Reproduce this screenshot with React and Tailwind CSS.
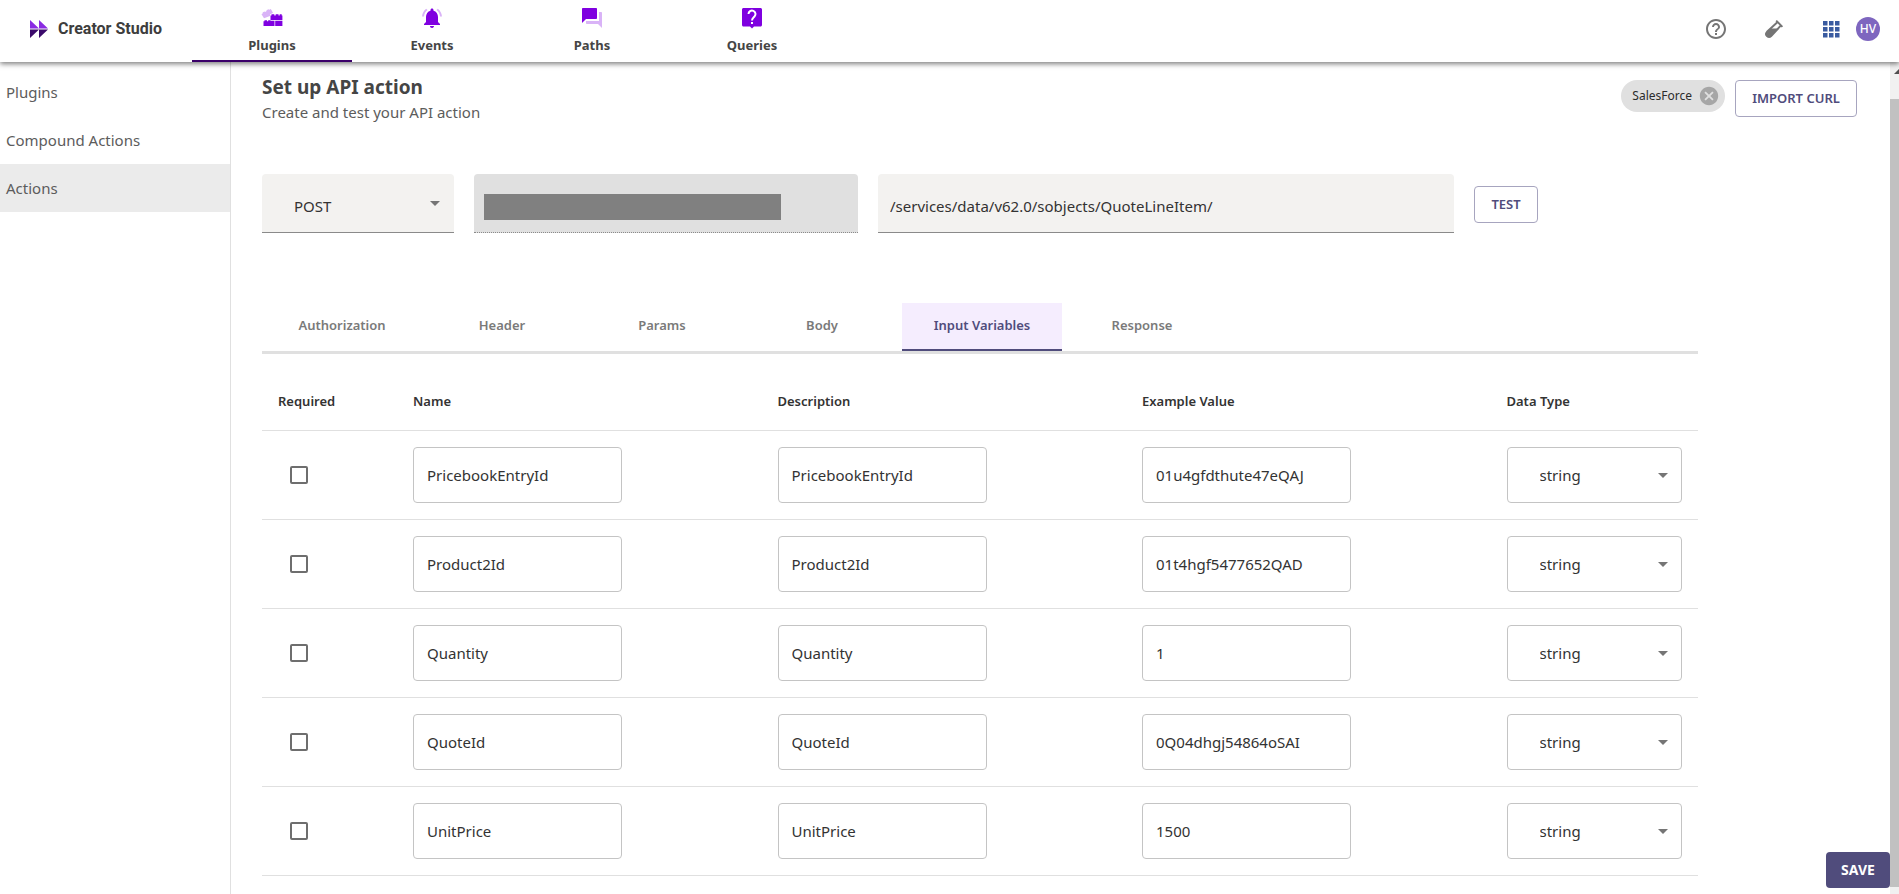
import { useState } from "react";
import { MdHelpOutline, MdCancel, MdArrowDropDown } from "react-icons/md";

function LogoIcon() {
  return (
    <svg className="size-[18px]" viewBox="0 0 18 18" aria-hidden="true">
      <path d="M0 0 L9 8.5 V0 L18 8.5 H0Z" fill="#8a2be2" />
      <path d="M0 9.5 H18 L9 18 V9.5 L0 18Z" fill="#3b0a6b" />
    </svg>
  );
}

function PluginsIcon() {
  return (
    <svg className="h-[18px] w-[22px]" viewBox="0 0 22 18" aria-hidden="true">
      <path d="M0.5 5.2 L1.8 4.3 L1.6 3.4 L3.4 2.4 L4.2 2.9 L5.6 2.1 L5.5 1.2 L7.4 0.2 L8.2 0.8 L9.8 0 L12 3.8 L9 5.6 V7 L3 9.3Z" fill="#d9b3f7" />
      <path d="M9.5 6.5h1V5.3h2.8v1.2h1.400V5.3h2.8v1.2h1.200V5.3h2v1.2h.7V11H9.5Z" fill="#7f00e0" />
      <path d="M2.5 12.3h1v-1H6v1h1.200v-1h2.300v.5h4V17h-11Z M14.2 11.800h7.2V17h-7.2Z" fill="#7f00e0" />
    </svg>
  );
}

function EventsIcon() {
  return (
    <svg className="size-6" viewBox="0 0 24 24" aria-hidden="true">
      <path fill="#d9b3f7" d="M7.58 4.08L6.15 2.65C3.75 4.48 2.17 7.3 2.03 10.5h2c.15-2.65 1.51-4.97 3.55-6.42zm12.39 6.42h2c-.15-3.2-1.73-6.02-4.12-7.85l-1.42 1.43c2.02 1.45 3.39 3.77 3.54 6.42z" />
      <path fill="#7f00e0" d="M18 11c0-3.07-1.64-5.64-4.5-6.32V4c0-.83-.67-1.5-1.5-1.5s-1.5.67-1.5 1.5v.68C7.63 5.36 6 7.92 6 11v5l-2 2v1h16v-1l-2-2v-5zm-6 11c.14 0 .27-.01.4-.04.65-.14 1.18-.58 1.44-1.18.1-.24.15-.5.15-.78h-4c.01 1.1.9 2 2.01 2z" />
    </svg>
  );
}

function PathsIcon() {
  return (
    <svg className="size-6" viewBox="0 0 24 24" aria-hidden="true">
      <path fill="#d9b3f7" d="M21 6h-2v9H6v2c0 .55.45 1 1 1h11l4 4V7c0-.55-.45-1-1-1z" />
      <path fill="#7f00e0" d="M17 12V3c0-.55-.45-1-1-1H3c-.55 0-1 .45-1 1v14l4-4h10c.55 0 1-.45 1-1z" />
    </svg>
  );
}

function QueriesIcon() {
  return (
    <svg className="size-6" viewBox="0 0 24 24" aria-hidden="true">
      <path fill="#7f00e0" d="M20.500 2h-17C2.700 2 2 2.700 2 3.500v15.500c0 .8.700 1.500 1.500 1.500H10l2 2 2-2h6.500c.8 0 1.500-.7 1.500-1.500V3.500c0-.8-.7-1.500-1.500-1.500z" />
      <path fill="none" stroke="#fff" strokeWidth="2" d="M8.500 8a3.500 3.500 0 1 1 6 2.500C13 12 12 12.500 12 14.500" />
      <rect x="11" y="16" width="2" height="2" fill="#fff" />
    </svg>
  );
}

function TubeIcon() {
  return (
    <svg className="size-5" viewBox="0 0 20 20" aria-hidden="true">
      <path d="M12.2 1.6 L18.4 7.8 M13.6 3 L3 12.8 a2.900 2.900 0 0 0 4.200 4.200 L17 6.400" fill="none" stroke="#757575" strokeWidth="1.9" />
      <path d="M6.5 9.5 H14 L7.2 17 a3 3 0 0 1 -4.2 -4.2Z" fill="#757575" />
    </svg>
  );
}

function AppsIcon() {
  return (
    <svg className="size-[17px]" viewBox="0 0 17 17" fill="#3a5ba0" aria-hidden="true">
      {[0, 6, 12].map((y) => [0, 6, 12].map((x) => <rect key={`${x}-${y}`} x={x} y={y} width="4.5" height="4.5" />))}
    </svg>
  );
}

const NAV = [
  { label: "Plugins", icon: <PluginsIcon /> },
  { label: "Events", icon: <EventsIcon /> },
  { label: "Paths", icon: <PathsIcon /> },
  { label: "Queries", icon: <QueriesIcon /> },
];

const SIDEBAR = ["Plugins", "Compound Actions", "Actions"];
const TABS = ["Authorization", "Header", "Params", "Body", "Input Variables", "Response"];
const ROWS = [
  { name: "PricebookEntryId", example: "01u4gfdthute47eQAJ" },
  { name: "Product2Id", example: "01t4hgf5477652QAD" },
  { name: "Quantity", example: "1" },
  { name: "QuoteId", example: "0Q04dhgj54864oSAI" },
  { name: "UnitPrice", example: "1500" },
];

function Header() {
  return (
    <header className="relative z-10 flex h-[62px] shrink-0 items-stretch bg-white shadow-[0_2px_5px_rgba(0,0,0,0.5)]">
      <a href="#home" className="flex w-48 items-center gap-2.5 pb-1 pl-[30px] font-[Roboto,sans-serif] text-base font-bold text-[#3d3d3d]">
        <LogoIcon />
        Creator Studio
      </a>
      <nav className="flex">
        {NAV.map(({ label, icon }, i) => (
          <a
            key={label}
            href={`#${label.toLowerCase()}`}
            aria-current={i === 0 ? "page" : undefined}
            className={`flex w-40 flex-col items-center border-b-2 pt-1.5 text-[13px] font-bold text-[#454545] ${i === 0 ? "border-[#3b0069]" : "border-transparent"}`}
          >
            <span className="flex h-6 items-center">{icon}</span>
            <span className="pt-[5px] leading-5">{label}</span>
          </a>
        ))}
      </nav>
      <div className="ml-auto flex items-center pr-[19px] pb-1">
        <button type="button" aria-label="Help" className="mr-9"><MdHelpOutline className="size-6 text-[#757575]" /></button>
        <button type="button" aria-label="Test lab" className="mr-[39px]"><TubeIcon /></button>
        <button type="button" aria-label="Apps" className="mr-4"><AppsIcon /></button>
        <button type="button" className="size-6 rounded-full bg-[#7e66bf] text-xs font-medium text-white">HV</button>
      </div>
    </header>
  );
}

function Sidebar() {
  return (
    <nav className="w-[231px] shrink-0 border-r border-[#e0e0e0] pt-1.5">
      {SIDEBAR.map((label) => (
        <a
          key={label}
          href={`#${label.toLowerCase().replace(" ", "-")}`}
          className={`flex h-12 items-center pl-1.5 text-[15px] text-[#5c5c5c] ${label === "Actions" ? "bg-[#ebebeb]" : ""}`}
        >
          {label}
        </a>
      ))}
    </nav>
  );
}

function SelectBox({ label, value, options, className, arrowClassName }) {
  return (
    <div className="relative">
      <select aria-label={label} defaultValue={value} className={`w-full appearance-none pl-8 text-[15px] text-[#333] ${className}`}>
        {options.map((o) => <option key={o}>{o}</option>)}
      </select>
      <MdArrowDropDown className={`pointer-events-none absolute size-6 text-[#757575] ${arrowClassName}`} />
    </div>
  );
}

function RequestBar() {
  return (
    <form className="flex items-start gap-5" onSubmit={(e) => e.preventDefault()}>
      <div className="w-48">
        <SelectBox
          label="Method"
          value="POST"
          options={["GET", "POST", "PUT", "PATCH", "DELETE"]}
          className="h-[59px] rounded-t border-b border-[#8a8a8a] bg-[#f3f2f0] pt-1.5"
          arrowClassName="top-[17px] right-[7px]"
        />
      </div>
      <div className="h-[59px] w-96 rounded-t border-b border-dotted border-[#8a8a8a] bg-[#e0e0e0] px-2.5 pt-5">
        <div className="h-[26px] w-[297px] bg-[#808080]" />
      </div>
      <input
        aria-label="Path"
        defaultValue="/services/data/v62.0/sobjects/QuoteLineItem/"
        className="h-[59px] w-xl rounded-t border-b border-[#8a8a8a] bg-[#f3f2f0] px-3 pt-1.5 text-[15px] text-[#333]"
      />
      <button type="button" className="mt-3 h-[37px] w-16 rounded border border-[#a7a5bf] text-[13px] font-semibold text-[#504c7c]">TEST</button>
    </form>
  );
}

function Tabs() {
  const [active, setActive] = useState("Input Variables");
  return (
    <div role="tablist" className="mt-[70px] flex border-b-[3px] border-[#e0e0e0]">
      {TABS.map((label) => (
        <button
          key={label}
          type="button"
          role="tab"
          aria-selected={label === active}
          onClick={() => setActive(label)}
          className={`h-12 w-40 border-b-2 text-[13px] font-semibold ${label === active ? "border-[#504c7c] bg-[#f5edfe] text-[#504c7c]" : "border-transparent text-[#7a7a7a]"}`}
        >
          {label}
        </button>
      ))}
    </div>
  );
}

function Field({ label, value }) {
  return (
    <input
      aria-label={label}
      defaultValue={value}
      className="block h-14 w-[209px] rounded border border-[#c4c4c4] px-[13px] text-[15px] text-[#333]"
    />
  );
}

function VariablesTable() {
  return (
    <table className="mt-5 w-full table-fixed border-collapse text-left">
      <thead>
        <tr className="h-14 border-b border-[#e0e0e0] text-[13px] text-[#333]">
          <th className="w-[135px] px-4 font-semibold">Required</th>
          <th className="px-4 font-semibold">Name</th>
          <th className="px-4 font-semibold">Description</th>
          <th className="px-4 font-semibold">Example Value</th>
          <th className="w-[207px] px-4 font-semibold">Data Type</th>
        </tr>
      </thead>
      <tbody>
        {ROWS.map(({ name, example }) => (
          <tr key={name} className="border-b border-[#e0e0e0]">
            <td className="px-7 py-4">
              <input
                type="checkbox"
                aria-label={`${name} required`}
                className="block size-[18px] appearance-none rounded-[2px] border-2 border-[#6e6e6e] checked:bg-[#504c7c]"
              />
            </td>
            <td className="px-4 py-4"><Field label={`${name} name`} value={name} /></td>
            <td className="px-4 py-4"><Field label={`${name} description`} value={name} /></td>
            <td className="px-4 py-4"><Field label={`${name} example value`} value={example} /></td>
            <td className="px-4 py-4">
              <SelectBox
                label={`${name} data type`}
                value="string"
                options={["string", "number", "boolean"]}
                className="block h-14 rounded border border-[#c4c4c4] pt-0.5"
                arrowClassName="top-4 right-[7px]"
              />
            </td>
          </tr>
        ))}
      </tbody>
    </table>
  );
}

export default function App() {
  return (
    <div className="flex h-screen flex-col overflow-hidden bg-white font-['Noto_Sans',sans-serif]">
      <Header />
      <div className="flex min-h-0 flex-1">
        <Sidebar />
        <main className="relative min-w-0 flex-1 overflow-hidden pt-3 pr-[33px] pl-[31px]">
          <div className="flex items-start">
            <div>
              <h1 className="text-[19px] leading-[26px] font-bold text-[#454545]">Set up API action</h1>
              <p className="text-[15px] leading-6 text-[#5c5c5c]">Create and test your API action</p>
            </div>
            <div className="ml-auto flex items-start gap-2.5 pt-1.5">
              <span className="flex h-8 items-center gap-1.5 rounded-full bg-[#e0e0e0] pr-[5px] pl-[11px] text-xs text-[#2b2b2b]">
                SalesForce
                <button type="button" aria-label="Remove SalesForce"><MdCancel className="size-[22px] text-[#a6a6a6]" /></button>
              </span>
              <button type="button" className="h-[37px] w-[122px] rounded border border-[#a7a5bf] text-[13px] font-semibold text-[#504c7c]">IMPORT CURL</button>
            </div>
          </div>
          <div className="mt-[50px]"><RequestBar /></div>
          <div className="w-[90%]">
            <Tabs />
            <VariablesTable />
          </div>
          <button type="button" className="absolute right-0 bottom-1.5 h-9 w-16 rounded bg-[#504c7c] text-sm font-bold text-white">SAVE</button>
        </main>
        <div className="flex w-[9px] shrink-0 flex-col overflow-hidden bg-[#f1f1f1] pb-[7px]" aria-hidden="true">
          <svg className="h-[37px] w-[9px] shrink-0" viewBox="0 0 9 37">
            <path d="M4 12 L9 7 V12Z" fill="#505050" />
          </svg>
          <div className="flex-1 bg-[#c1c1c1]" />
        </div>
      </div>
    </div>
  );
}
